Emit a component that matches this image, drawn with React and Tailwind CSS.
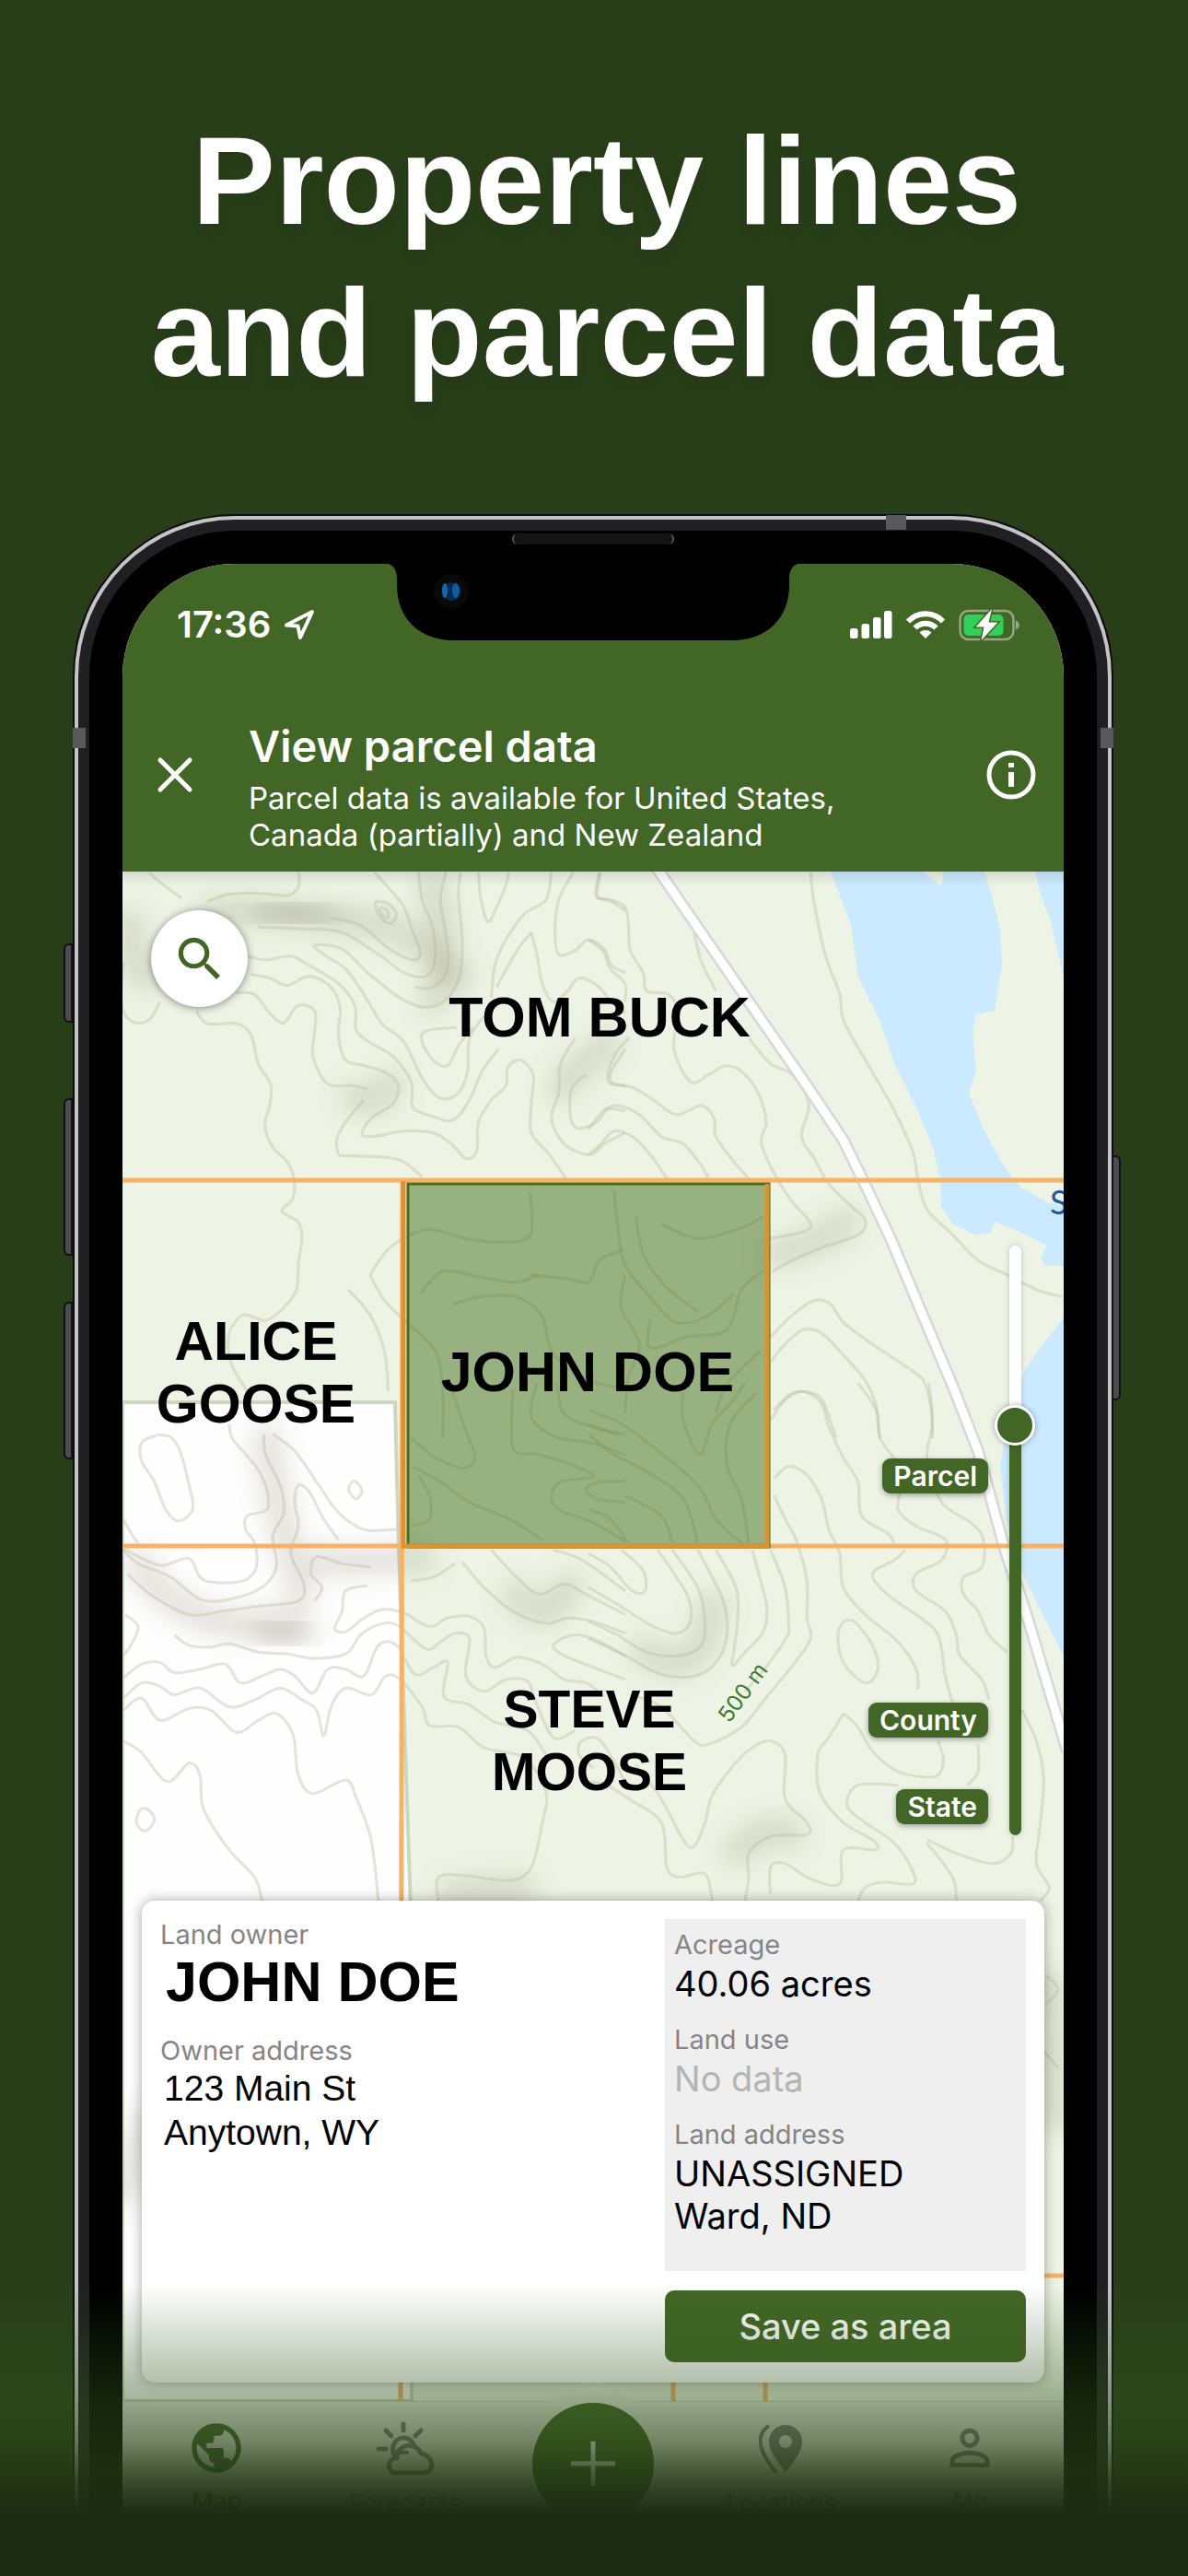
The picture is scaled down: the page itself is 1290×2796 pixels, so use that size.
import { MdPublic, MdSearch, MdPersonOutline } from "react-icons/md";

// Catmull-Rom through a flat "x,y x,y ..." list, returned as cubic segments
function smooth(list) {
  const p = list.trim().split(/\s+/).map((pair) => pair.split(",").map(Number));
  let d = `M${p[0][0]} ${p[0][1]}`;
  for (let i = 0; i < p.length - 1; i++) {
    const a = p[i - 1] || p[i];
    const b = p[i];
    const c = p[i + 1];
    const e = p[i + 2] || c;
    d += `C${b[0] + (c[0] - a[0]) / 6} ${b[1] + (c[1] - a[1]) / 6} ${c[0] - (e[0] - b[0]) / 6} ${c[1] - (e[1] - b[1]) / 6} ${c[0]} ${c[1]}`;
  }
  return d;
}

const tiles = [
  {
    id: "nw",
    transform: "translate(60 940) scale(0.3954)",
    lines: [
      "260,15 300,50 350,85",
      "420,95 480,75 560,72 640,78 670,55 672,15",
      "880,15 920,60 960,110 985,180 1005,235 985,255 920,225 840,160 760,140",
      "880,95 915,100 940,130 920,155 890,130 880,95",
      "895,110 915,120 915,140 895,125 895,110",
      "1000,15 1010,90 1040,170 1045,260 1020,300 960,290 890,240 790,180 690,170 560,165",
      "1075,15 1060,90 1075,180 1080,280 1040,330 990,330",
      "1115,15 1110,80 1120,200 1115,290 1080,360 1020,385 950,360 860,290 790,225 715,215 740,240 800,280 850,350 900,430 960,480 1010,580 1060,635 1110,620 1135,560 1140,470 1180,410",
      "1165,15 1170,80 1190,150 1215,110 1240,50 1248,15",
      "1365,15 1350,90 1290,130 1240,200 1210,270 1200,360",
      "1310,180 1270,230 1215,330",
      "1310,180 1325,240 1340,320 1370,370 1410,340 1440,305 1490,325 1530,370 1568,400",
      "1425,15 1385,90 1375,180 1385,240 1430,230 1465,200 1510,225 1530,270 1568,290",
      "1500,15 1492,80 1530,95 1568,120",
      "190,260 185,380 215,425 260,420 290,370",
      "530,245 580,255 650,245 700,270 780,320 825,380 830,450 880,490 930,520 980,590 985,660 1040,685 1095,695 1140,640 1175,560 1220,500",
      "540,295 590,305 640,325 700,300 760,330 785,390 780,460 800,530 850,545 910,565 945,600 930,650 870,690 845,735 890,738 960,725 1040,730 1090,760 1130,800 1160,780 1165,700 1200,640 1240,600 1245,550 1280,530 1315,570 1310,650 1310,730 1360,790 1405,855",
      "500,345 550,350 590,400 630,428 670,380 715,395 715,450 710,520 750,595 820,600 860,610",
      "390,395 420,430 500,430 540,460 560,540 595,600 590,660 578,710 600,770 640,810 658,855 655,910 625,945 670,975 680,1020 670,1090 665,1160 630,1210 580,1245 520,1230 480,1280 485,1360 530,1440",
      "780,790 775,750 800,700 850,640",
      "780,792 880,795 950,805 1010,850",
      "1105,440 1020,450 1010,480 1040,530 1080,545 1110,490 1150,440",
      "1430,470 1390,540 1385,620 1365,690 1400,760 1470,790 1510,760 1568,730",
      "1568,500 1530,560 1530,590 1568,600",
      "1460,570 1420,610 1418,690 1440,718 1490,700 1520,665 1568,670",
    ],
  },
  {
    id: "ne",
    transform: "translate(640 940) scale(0.3954)",
    lines: [
      "30,15 20,80 60,90 100,110 110,160 115,230 150,290 160,340 220,350 245,400 235,500 280,590 330,570 380,545 430,570 470,630 488,700 475,760 520,860 560,920 610,990 500,1020",
      "0,200 40,230 60,280 100,320 100,370",
      "110,470 70,520 55,590 120,605 180,640 240,680 310,655 345,690 350,740 400,810 440,855",
      "0,720 40,670 80,655 140,680 200,740 260,760 310,820 330,855",
      "0,790 30,765 70,725 120,740 170,790 215,855",
      "610,15 620,100 650,240 690,350 700,420 760,530 830,650 890,780 905,860 930,940 1000,1010 1070,1080 1150,1120 1230,1160 1300,1180",
      "290,180 310,260 350,340",
      "440,470 500,540 560,570 605,650 585,740 620,800 660,870 720,930 760,970 740,1010 640,1045 560,1080 505,1110",
      "500,1290 560,1230 620,1190 665,1200 700,1250 780,1310 870,1370 920,1410 940,1480 945,1568",
      "500,1360 540,1310 590,1270 640,1280 700,1340 760,1410 790,1480 800,1568",
      "510,1490 550,1450 590,1440 640,1460 670,1540 680,1568",
    ],
  },
  {
    id: "sw",
    transform: "translate(60 1500) scale(0.3954 0.37)",
    lines: [
      "285,152 240,175 240,230 275,290 305,370 340,405 380,370 370,300 345,200 320,160 285,152",
      "480,120 490,165 550,240 580,300 585,370 530,390 525,430 550,470 555,540 520,580 440,585 400,570 370,515 300,535 250,520 190,485",
      "575,150 580,210 620,300 630,380 600,450 610,540 570,600 480,635 400,635 320,570 230,530 190,490",
      "600,150 660,200 720,290 780,380 850,430 940,430",
      "780,460 740,400 700,320 670,300 660,350 670,420 650,500 685,590 670,640 560,655 460,670 370,680 270,625 200,560",
      "810,300 825,288 845,315 830,340 810,320 810,300",
      "190,400 210,440 230,470",
      "870,540 790,530 720,510 705,560 735,600 715,640",
      "860,595 800,610 790,670 770,720 800,730 850,690 900,665 960,675 1030,715 1080,690 1140,685 1180,720 1185,800 1210,835 1270,805 1340,825 1400,870 1460,880 1510,920",
      "195,680 230,715 210,770 190,800",
      "330,740 370,770 430,775 480,765 560,790 640,795 710,808 800,795 840,740 890,710 940,710 1020,780 1060,760 1100,735 1140,750 1130,860 1180,905 1240,870 1300,875 1320,930 1370,1040 1430,1020",
      "190,865 240,825 290,820 330,850 400,840 470,825 510,880 570,860 620,840 660,860 710,910 750,840 800,840 850,860 890,770 940,770 990,855 1040,835 1080,820 1070,920 1140,945 1210,995 1300,1020 1350,1090",
      "190,925 240,880 290,890 330,915 400,895 480,950 550,930 620,895 680,930 720,960 740,1035 760,950 800,895 870,915 910,860 950,870 1010,950 1030,1005 1110,1010 1180,1070 1290,1100 1350,1200 1340,1290 1310,1420 1250,1460 1130,1445 1055,1450 1055,1520",
      "190,960 240,925 290,990 370,955 430,960 500,1025 560,990 610,970 655,1030 670,1150 710,1205 800,1165 830,1220 870,1340 890,1520",
      "190,1050 240,1085 310,1170 370,1115 400,1150 410,1250 480,1370 550,1450 570,1520",
      "235,1250 225,1290 250,1315 275,1280 255,1250 235,1250",
      "1120,525 1180,600 1260,670 1350,705 1410,690 1480,700 1568,735",
      "1200,490 1260,560 1330,620 1400,590 1460,620 1568,680",
      "1370,490 1450,520 1568,610",
      "1568,800 1480,750 1420,740 1370,770 1400,800 1470,830 1568,870",
      "980,580 1040,570 1100,530",
      "1568,1170 1500,1050 1450,1050 1440,1090 1480,1130",
      "980,160 1040,215 1120,250 1155,220 1130,140 1090,20",
      "985,245 1060,290 1140,350 1250,400 1340,460",
      "980,420 1030,400 1030,330 1000,270",
      "1260,20 1260,190 1330,210 1420,240 1480,275 1390,290 1365,340 1400,380 1480,410 1568,465",
      "1568,350 1490,340 1460,310 1500,290 1568,290",
      "1325,0 1310,100 1380,160 1470,175 1568,210",
      "1380,0 1400,90 1480,130 1568,150",
    ],
  },
  {
    id: "se",
    transform: "translate(640 1500) scale(0.3954 0.37)",
    lines: [
      "500,110 540,50 590,25 640,60 660,130 700,220 740,290 750,390 820,440 840,470",
      "510,280 550,245 600,270 640,340 660,430 690,500 700,600 760,680 850,760 900,840 905,900",
      "510,330 540,400 570,460 600,580 600,690 610,750 560,830 490,920 420,1010 330,1060 290,1050 200,950 130,920",
      "740,0 790,80 800,160 850,240 860,300 850,370 900,420 980,460 970,520 900,560 900,610 980,670 1010,740 1020,800 1080,870 1100,930",
      "935,0 945,120 930,220 970,350 1050,410 1085,460 1080,540 1030,570 1030,620 1070,670 1100,740 1150,790",
      "870,490 840,520 780,560 820,620 900,680 960,740 980,860 1000,940",
      "700,700 685,740 700,820 760,880 795,840 780,770 730,700 700,700",
      "500,490 540,600 550,710 545,745 490,830 430,905",
      "450,490 470,570 490,660 480,730 430,790 395,830 400,780 410,690 405,600 350,490",
      "0,500 60,540 120,610 155,610 150,550 90,490",
      "0,600 80,650 170,710 240,735 280,700 270,620 190,490",
      "0,700 80,740 160,790 250,800 310,770 320,700 300,600 230,490",
      "0,750 100,800 200,855 290,860 350,820 380,740 370,640 300,490",
      "0,1170 50,1180 110,1220 200,1290 215,1420 250,1450 320,1440 340,1520",
      "130,1120 200,1220 260,1340 290,1360 320,1290 340,1210 400,1120 450,1070 500,1050 540,1090 540,1220 600,1290 600,1325 500,1330 440,1380 440,1450 430,1520",
      "700,970 660,1040 630,1090 635,1200 700,1290 780,1340 790,1370 700,1370 690,1470 610,1455 540,1410 500,1420 500,1500",
      "700,970 740,1010 780,1080 850,1140 950,1155 975,1110 960,1050",
      "850,1180 740,1180 710,1240 760,1290 840,1350 890,1430 890,1470 810,1465 760,1480 740,1520",
      "930,1340 1010,1380 1110,1410 1160,1380 1165,1330",
      "1070,1060 1070,1140 1040,1180",
      "1190,960 1230,1050 1250,1160 1240,1300 1230,1410 1265,1480 1240,1520",
      "930,1350 1000,1450 1010,1520",
      "1260,1740 1290,1780 1260,1820",
      "1250,1960 1290,2010",
      "0,80 90,120 180,190 300,300 350,400 420,470",
      "0,150 70,210 160,260 260,340 300,470",
      "0,370 60,400 110,470",
      "260,30 260,110 305,210 340,120 390,60 430,0",
      "460,30 390,120 380,240 420,340 440,470",
      "100,330 200,390 230,470",
    ],
  },
  {
    id: "selected",
    transform: "translate(640 940) scale(0.3954)",
    lines: [
      "70,890 80,980 90,1060 110,1110 160,1170 240,1250 330,1230 400,1170",
      "130,960 150,1060 210,1150 300,1220",
      "-160,1120 -60,1130 0,1140 30,1080 95,1050",
      "-460,1170 -400,1110 -300,1125 -200,1140 -140,1120",
      "-600,1120 -540,1040 -440,995 -340,1020 -240,1030 -160,1010 -160,890",
      "-600,1120 -560,1190 -500,1250 -420,1330 -400,1440 -400,1568",
      "-370,1200 -300,1180 -200,1180 -130,1230 -100,1330 -20,1400 80,1430",
      "100,1120 90,1210 140,1310 110,1400 100,1500",
      "170,1240 170,1320 270,1290 380,1270 420,1160 480,1110",
      "200,980 300,1020 420,990 480,960",
      "470,1330 380,1420 350,1500",
      "-660,1160 -600,1230 -560,1330 -550,1440",
      "0,1530 80,1560",
    ],
  },
];

const shades = [
  "M230 990 C300 985 330 995 400 1000 C460 1010 470 1040 500 1060",
  "M385 1190 C400 1200 420 1190 425 1175",
  "M470 960 C485 1010 490 1060 470 1085",
  "M610 1180 C620 1160 650 1150 660 1130",
  "M140 1000 C145 1020 145 1050 160 1060",
  "M845 1360 C880 1350 900 1345 920 1325",
  "M150 1695 C200 1770 270 1770 325 1750",
  "M290 1560 C300 1620 310 1680 330 1720",
  "M350 1690 C380 1700 410 1690 460 1690",
  "M560 1730 C590 1760 600 1750 620 1720",
  "M700 1790 C740 1820 770 1800 775 1740",
  "M800 2010 C820 1990 840 1980 860 1990",
  "M490 2055 C520 2050 545 2050 570 2050",
  "M160 2300 C150 2350 140 2350 135 2380",
  "M1140 2150 C1145 2200 1150 2250 1145 2300",
];

const owners = [
  { name: "TOM BUCK", place: "left-[518px] top-[158px] text-[61px]", lines: ["TOM BUCK"] },
  { name: "ALICE GOOSE", place: "left-[145px] top-[544px] text-[59px]", lines: ["ALICE", "GOOSE"] },
  { name: "JOHN DOE", place: "left-[505px] top-[543px] text-[61px]", lines: ["JOHN DOE"] },
  { name: "STEVE MOOSE", place: "left-[507px] top-[943px] text-[57px]", lines: ["STEVE", "MOOSE"] },
];

const levels = [
  { name: "Parcel", place: "top-[637px]" },
  { name: "County", place: "top-[902px]" },
  { name: "State", place: "top-[996px]" },
];

function TopoMap() {
  return (
    <svg viewBox="134 945 1022 1660" preserveAspectRatio="xMidYMin slice" className="absolute inset-0 h-full w-full" aria-hidden="true">
      <defs>
        <filter id="soft" x="-50%" y="-50%" width="200%" height="200%">
          <feGaussianBlur stdDeviation="13" />
        </filter>
      </defs>
      <rect x="134" y="945" width="1022" height="1660" fill="#edf4e5" />
      <path d="M134 1521H430L433 1640L437 1780L448 2100V2605H134Z" fill="#fefefe" stroke="#cbd8c0" strokeWidth="4" />

      <g fill="none" stroke="#8c876a" strokeOpacity="0.24" strokeWidth="30" strokeLinecap="round" filter="url(#soft)">
        {shades.map((d) => (
          <path key={d} d={d} />
        ))}
      </g>
      <ellipse cx="310" cy="1772" rx="35" ry="7" fill="#77725f" fillOpacity="0.5" filter="url(#soft)" />
      <ellipse cx="320" cy="990" rx="50" ry="6" fill="#77725f" fillOpacity="0.5" filter="url(#soft)" />

      {tiles.map((tile) => (
        <g key={tile.id} transform={tile.transform} fill="none" stroke="#b9b69b" strokeOpacity="0.36" strokeWidth="8" strokeLinejoin="round">
          {tile.lines.map((line) => (
            <path key={line} d={smooth(line)} />
          ))}
        </g>
      ))}

      <g fill="#cbeaff">
        <path d="M903 945L925 1003L933 1059L956 1106L972 1153L996 1201L1014 1244L1022 1280L1023 1308L1035 1327L1059 1339L1077 1337L1081 1325L1106 1335L1138 1351L1131 1365L1136 1373H1156V1308L1138 1304L1110 1288L1093 1268L1069 1225L1053 1185L1061 1161L1057 1118L1061 1100L1081 1096L1089 1047L1087 1007L1079 975L1070 945H1000L1023 960L1026 945Z" />
        <path d="M1125 945L1131 970L1142 999L1156 1059V945Z" />
        <path d="M1156 1430L1130 1462L1114 1486L1095 1540L1087 1590L1094 1650L1112 1707L1126 1737L1156 1797Z" />
      </g>
      <path d="M1003 945L1023 961L1026 945Z" fill="#edf4e5" />

      <g fill="none" strokeLinejoin="round">
        <path d="M712 938L814 1086L877 1177L917 1237L940 1284L968 1343L996 1410L1037 1507L1063 1574L1091 1677L1118 1759L1160 1900" stroke="#d9d6d8" strokeWidth="14" />
        <path d="M712 938L814 1086L877 1177L917 1237L940 1284L968 1343L996 1410L1037 1507L1063 1574L1091 1677L1118 1759L1160 1900" stroke="#fefefe" strokeWidth="9" />
      </g>

      <g stroke="#f7b268" strokeWidth="5" fill="none">
        <path d="M134 1280H1156M134 1677H1156M438 1280L436 2605M1100 2469H1156M732 2560V2605M832 2560V2605" />
      </g>
      <rect x="444" y="1284" width="392" height="394" fill="#4a7323" fillOpacity="0.52" stroke="#4a6b1c" strokeWidth="3" />
      <path d="M439 1281V1677H834V1284" fill="none" stroke="#dc932f" strokeWidth="5" />

      <text x="1141" y="1317" fontSize="36" fill="#1e57a5" fontFamily="Lato, sans-serif">S</text>
      <text x="809" y="1837" fontSize="24" fill="#3f7a2c" fontFamily="Inter, sans-serif" textAnchor="middle" dominantBaseline="middle" transform="rotate(-54 809 1837)">
        500 m
      </text>
    </svg>
  );
}

function StatusBar() {
  return (
    <div className="flex h-[132px] items-center justify-between pr-12 pl-[59px]">
      <div className="flex items-center gap-3.5">
        <span className="text-[40px] leading-10 font-semibold">17:36</span>
        <svg viewBox="0 0 34 34" className="size-[34px]" fill="none" stroke="white" strokeWidth="4" strokeLinejoin="round" aria-hidden="true">
          <path d="M31 3L3 17.5L15.5 18.5L18 31Z" />
        </svg>
      </div>
      <div className="flex items-center gap-3.5">
        <svg viewBox="0 0 46 32" className="h-8 w-[46px]" fill="white" aria-hidden="true">
          <rect x="0" y="20" width="8.500" height="11" rx="2.500" />
          <rect x="12.500" y="15" width="8.500" height="16" rx="2.500" />
          <rect x="25" y="8" width="8.500" height="23" rx="2.500" />
          <rect x="37" y="1" width="8.500" height="30" rx="2.500" />
        </svg>
        <svg viewBox="0 0 44 32" className="h-8 w-11" fill="none" stroke="white" strokeWidth="6" aria-hidden="true">
          <path d="M3 12.500C13.500 1.500 30.500 1.500 41 12.500" />
          <path d="M10.500 19.500C17 13 27 13 33.500 19.500" />
          <path d="M22 31L15.500 24.500C19 21.200 25 21.200 28.500 24.500Z" fill="white" stroke="none" />
        </svg>
        <svg viewBox="0 0 66 38" className="h-[38px] w-[66px]" aria-hidden="true">
          <rect x="1.500" y="4" width="58" height="31" rx="9" fill="none" stroke="#94a882" strokeWidth="2.500" />
          <path d="M62 14.500C67 16 67 23 62 24.500Z" fill="#94a882" />
          <rect x="5.500" y="8" width="43" height="23" rx="5" fill="#2fd158" />
          <path d="M36 2L18.500 21.500H27.500L24.500 36L42.500 16.500H32.500Z" fill="white" stroke="#416625" strokeWidth="3" paintOrder="stroke" />
        </svg>
      </div>
    </div>
  );
}

function Header() {
  return (
    <header className="bg-[#416625] text-white">
      <StatusBar />
      <div className="flex items-start pt-[38px] pr-[30px] pb-5 pl-[37px]">
        <button type="button" aria-label="Close" className="flex h-[118px] w-10 items-center">
          <svg viewBox="0 0 40 40" className="size-10" stroke="white" strokeWidth="5" strokeLinecap="round" aria-hidden="true">
            <path d="M4 4L36 36M36 4L4 36" />
          </svg>
        </button>
        <div className="ml-[60px] flex-1">
          <h2 className="text-[47px] leading-14 font-semibold">View parcel data</h2>
          <p className="mt-2 text-[33px] leading-10">
            Parcel data is available for United States,
            <br />
            Canada (partially) and New Zealand
          </p>
        </div>
        <button type="button" aria-label="Info" className="flex h-[118px] items-center">
          <svg viewBox="0 0 54 54" className="size-[54px]" aria-hidden="true">
            <circle cx="27" cy="27" r="24" fill="none" stroke="white" strokeWidth="5" />
            <path d="M27 24V40M27 14V19" stroke="white" strokeWidth="6" />
          </svg>
        </button>
      </div>
    </header>
  );
}

function ParcelCard() {
  const label = "text-[29px] leading-[34px] text-[#858585]";
  return (
    <section className="absolute inset-x-[21px] top-[1117px] flex justify-between rounded-[14px] bg-white p-5 pb-[22px] shadow-[0_0_14px_rgba(0,0,0,0.35)]">
      <dl>
        <dt className={label}>Land owner</dt>
        <dd className="mt-1 pl-1.5 font-['Liberation_Sans',sans-serif] text-[61px] leading-[60px] font-bold">JOHN DOE</dd>
        <dt className={`mt-7 ${label}`}>Owner address</dt>
        <dd className="pl-1 font-['Liberation_Sans',sans-serif] text-[39px] leading-12">
          123 Main St
          <br />
          Anytown, WY
        </dd>
      </dl>
      <div className="w-[392px]">
        <dl className="bg-[#efefef] px-2.5 pt-[11px] pb-[37px] text-[38px] leading-[46px]">
          <dt className={label}>Acreage</dt>
          <dd className="mt-0.5">40.06 acres</dd>
          <dt className={`mt-[21px] ${label}`}>Land use</dt>
          <dd className="mt-0.5 text-[#b4b4b4]">No data</dd>
          <dt className={`mt-[21px] ${label}`}>Land address</dt>
          <dd className="mt-0.5">
            UNASSIGNED
            <br />
            Ward, ND
          </dd>
        </dl>
        <button type="button" className="mt-[21px] h-[78px] w-full rounded-[10px] bg-[#416625] text-[38px] font-medium text-white">
          Save as area
        </button>
      </div>
    </section>
  );
}

function ForecastIcon() {
  return (
    <svg viewBox="0 0 64 60" className="h-[60px] w-16" fill="none" stroke="currentColor" strokeWidth="5" strokeLinecap="round" strokeLinejoin="round" aria-hidden="true">
      <path d="M30 4V11M11 11L17 17M49 11L43 17M3 31H11" />
      <path d="M23 41C14 32 20 19 30 19C36 19 39 22 41 26" />
      <path d="M22 57C12 57 12 43 21 41C23 27 42 21 49 36C64 39 65 57 51 57Z" />
      <path d="M21 41C23 35 28 34 34 35" strokeWidth="4" />
    </svg>
  );
}

function LocationsIcon() {
  return (
    <svg viewBox="0 0 48 54" className="h-[54px] w-12" fill="currentColor" aria-hidden="true">
      <path fillRule="evenodd" d="M29 1C39 1 47 9 47 19C47 30 37 42 29 52C21 42 11 30 11 19C11 9 19 1 29 1ZM29 12A7 7 0 1 0 29 26A7 7 0 1 0 29 12Z" />
      <path d="M11 2C-5 12 1 32 19 53" fill="none" stroke="currentColor" strokeWidth="4" />
    </svg>
  );
}

function TabBar() {
  return (
    <nav className="relative grid flex-1 grid-cols-5 border-t border-[#c8cec2] bg-[#e6eae0] text-[26px] leading-8 text-[#7d7d7d]">
      <a href="#map" className="flex flex-col items-center gap-2.5 pt-[18px] text-[#416625]">
        <MdPublic size={64} />
        Map
      </a>
      <a href="#forecasts" className="flex flex-col items-center gap-3.5 pt-5">
        <ForecastIcon />
        Forecasts
      </a>
      <div className="flex justify-center">
        <button type="button" aria-label="Add" className="-mt-4 flex size-[166px] items-center justify-center rounded-full bg-[#e6eae0]">
          <span className="flex size-[132px] items-center justify-center rounded-full bg-[#416625]">
            <svg viewBox="0 0 48 48" className="size-12" stroke="white" strokeWidth="5" aria-hidden="true">
              <path d="M24 0V48M0 24H48" />
            </svg>
          </span>
        </button>
      </div>
      <a href="#locations" className="flex flex-col items-center gap-4 pt-6">
        <LocationsIcon />
        Locations
      </a>
      <a href="#me" className="flex flex-col items-center gap-2.5 pt-[18px]">
        <MdPersonOutline size={64} />
        Me
      </a>
    </nav>
  );
}

export default function App() {
  return (
    <main className="relative flex min-h-screen flex-col overflow-hidden bg-[#283e19] font-[Inter,sans-serif]">
      <h1 className="pt-[114px] pl-7 text-center font-['Liberation_Sans',sans-serif] text-[135px] leading-[165px] font-bold text-white [text-shadow:0_8px_12px_rgba(0,0,0,0.08)]">
        Property lines
        <br />
        and parcel data
      </h1>

      <div className="relative mt-[114px] mr-[81px] ml-[79px] flex flex-1 flex-col">
        {/* side buttons */}
        <div className="absolute top-[466px] -left-2.5 h-[86px] w-2.5 rounded-l-md border-2 border-[#111] bg-[#4b4b50]" />
        <div className="absolute top-[634px] -left-2.5 h-[171px] w-2.5 rounded-l-md border-2 border-[#111] bg-[#4b4b50]" />
        <div className="absolute top-[855px] -left-2.5 h-[171px] w-2.5 rounded-l-md border-2 border-[#111] bg-[#4b4b50]" />
        <div className="absolute top-[696px] -right-2 h-[266px] w-2.5 rounded-r-md border-2 border-[#111] bg-[#4b4b50]" />

        <div className="flex flex-1 flex-col rounded-t-[176px] bg-[#0c0c0c] px-0.5 pt-0.5">
          <div className="flex flex-1 flex-col rounded-t-[174px] bg-[#c4c4c8] px-1 pt-1">
            <div className="flex flex-1 flex-col rounded-t-[170px] bg-[#202022] px-3 pt-3">
              <div className="flex flex-1 flex-col rounded-t-[158px] bg-black px-9 pt-9">
                <div className="relative flex flex-1 flex-col overflow-hidden rounded-t-[122px] bg-white">
                  <Header />
                  <div className="relative h-[1660px] overflow-hidden">
                    <TopoMap />
                    <div className="absolute inset-x-0 top-0 h-4 bg-linear-to-b from-black/10 to-transparent" />
                    <button type="button" aria-label="Search" className="absolute top-[42px] left-[31px] flex size-[105px] items-center justify-center rounded-full bg-white text-[#416625] shadow-[0_1px_10px_rgba(0,0,0,0.45)]">
                      <MdSearch size={62} />
                    </button>
                    {owners.map((owner) => (
                      <p
                        key={owner.name}
                        className={`absolute -translate-x-1/2 -translate-y-1/2 text-center font-['Liberation_Sans',sans-serif] leading-[68px] font-bold whitespace-nowrap ${owner.place}`}
                      >
                        {owner.lines.map((line) => (
                          <span key={line} className="block">{line}</span>
                        ))}
                      </p>
                    ))}
                    {levels.map((level) => (
                      <span
                        key={level.name}
                        className={`absolute right-[82px] rounded-[9px] bg-[#416625] px-3 text-[30px] leading-[38px] font-semibold text-white shadow-[0_2px_6px_rgba(0,0,0,0.35)] ${level.place}`}
                      >
                        {level.name}
                      </span>
                    ))}
                    <input
                      type="range"
                      aria-label="Map detail level"
                      defaultValue="71"
                      className="absolute top-[406px] right-[31px] h-[640px] w-11 appearance-none bg-transparent [direction:rtl] [writing-mode:vertical-lr] [&::-webkit-slider-runnable-track]:w-[13px] [&::-webkit-slider-runnable-track]:rounded-full [&::-webkit-slider-runnable-track]:bg-linear-to-b [&::-webkit-slider-runnable-track]:from-white [&::-webkit-slider-runnable-track]:from-30% [&::-webkit-slider-runnable-track]:to-[#416625] [&::-webkit-slider-runnable-track]:to-30% [&::-webkit-slider-runnable-track]:shadow-[0_0_6px_rgba(0,0,0,0.2)] [&::-webkit-slider-thumb]:-ml-4 [&::-webkit-slider-thumb]:size-11 [&::-webkit-slider-thumb]:appearance-none [&::-webkit-slider-thumb]:rounded-full [&::-webkit-slider-thumb]:border-3 [&::-webkit-slider-thumb]:border-white [&::-webkit-slider-thumb]:bg-[#416625] [&::-webkit-slider-thumb]:shadow-[0_0_6px_rgba(0,0,0,0.35)]"
                    />
                    <ParcelCard />
                  </div>
                  <TabBar />

                  {/* notch */}
                  <svg viewBox="0 0 454 84" className="absolute -top-px left-1/2 h-[84px] w-[454px] -translate-x-1/2" aria-hidden="true">
                    <path d="M0 0C10 1 14 7 14 18V24C14 60 38 84 76 84H378C416 84 440 60 440 24V18C440 7 444 1 454 0Z" fill="black" />
                    <circle cx="73" cy="31" r="19" fill="#07090b" />
                    <circle cx="73" cy="31" r="10" fill="#052a4d" />
                    <ellipse cx="66" cy="30" rx="3" ry="8" fill="#1268ac" />
                    <ellipse cx="78" cy="30" rx="4" ry="8" fill="#0d5c9e" />
                  </svg>
                </div>
              </div>
            </div>
          </div>
        </div>

        {/* speaker grille and antenna bands */}
        <div className="absolute top-[21px] left-1/2 h-3 w-44 -translate-x-1/2 rounded-full border-x-2 border-[#555] bg-[#141414]" />
        <div className="absolute top-px right-[225px] h-4 w-[22px] bg-[#59595c]" />
        <div className="absolute top-[232px] left-0 h-[22px] w-3.5 bg-[#59595c]" />
        <div className="absolute top-[232px] right-0 h-[22px] w-3.5 bg-[#59595c]" />
      </div>

      <div className="pointer-events-none absolute inset-x-0 bottom-0 h-[316px] bg-[linear-gradient(rgb(48_82_28/0),rgb(48_82_28/0.44)_40%,rgb(42_68_24/0.62)_54%,rgb(36_56_20/0.82)_64%,rgb(32_48_20/0.92)_71%,#1d2b13_79%)]" />
    </main>
  );
}
